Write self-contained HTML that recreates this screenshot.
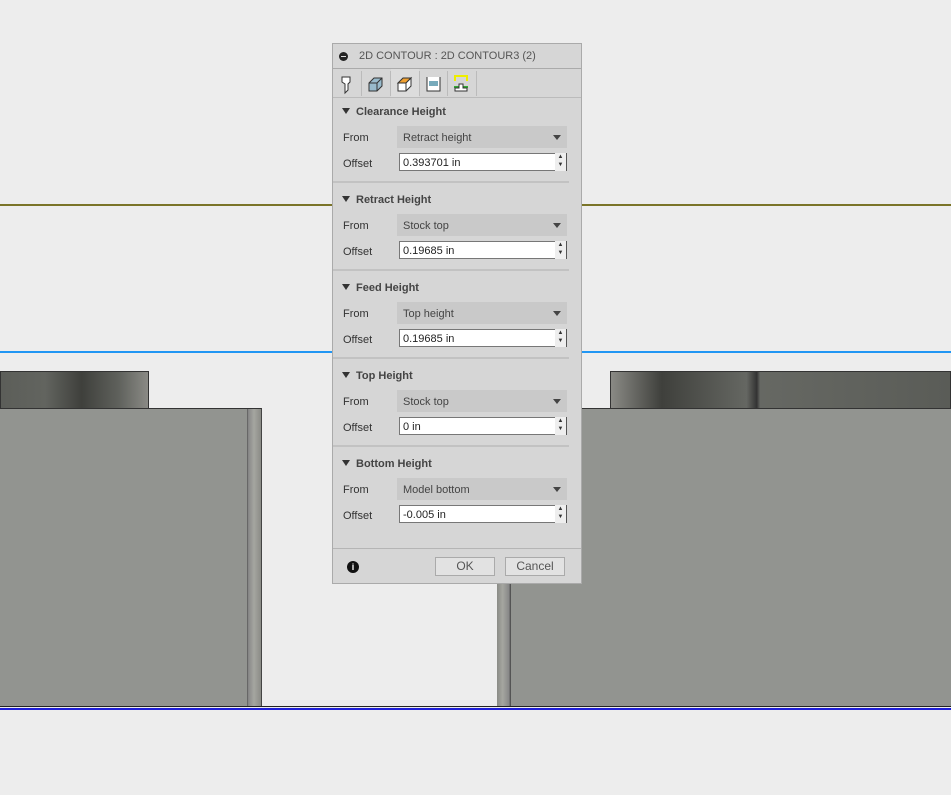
<!DOCTYPE html>
<html><head><style>
body{margin:0;width:951px;height:795px;background:#ededed;position:relative;overflow:hidden;font-family:"Liberation Sans",sans-serif;}
.a{position:absolute}
.dark{background:linear-gradient(90deg,#5c5e59 0%,#62645f 30%,#3f403c 55%,#5f615c 80%,#8a8a85 100%);border:1px solid #333;box-sizing:border-box}
.gray{background:#929490;}
.dlg{left:332px;top:43px;width:250px;height:541px;background:#d6d6d6;border:1px solid #aaa;box-sizing:border-box;font-size:11px;color:#333}
.sec{position:absolute;left:0;width:248px;height:88px}
.sec h{position:absolute;left:9px;top:8px;font-weight:bold;font-size:11px;color:#444}
.sec h b{display:inline-block;width:0;height:0;border-left:4px solid transparent;border-right:4px solid transparent;border-top:6px solid #333;margin-right:6px;vertical-align:1px}
.lbl{position:absolute;left:10px;font-size:11px;color:#333}
.dd{position:absolute;left:64px;top:28px;width:170px;height:22px;background:#c9c9c9}
.dd span{position:absolute;left:6px;top:6px;color:#444}
.dd i{position:absolute;right:6px;top:9px;border-left:4px solid transparent;border-right:4px solid transparent;border-top:5px solid #444}
.inp{position:absolute;left:66px;top:55px;width:156px;height:18px;background:#fff;border:1px solid #777;border-right:none;box-sizing:border-box;font-size:11px;padding:3px 3px 0;color:#222}
.sp{position:absolute;left:222px;top:55px;width:12px;height:18px;border-right:1px solid #555;box-sizing:border-box;font-size:6px;text-align:center;line-height:8px;background:#eee}
.hr{position:absolute;left:0;top:83px;width:236px;height:2px;background:#c2c2c2}
.btn{position:absolute;top:513px;height:19px;background:#e2e2e2;border:1px solid #aaa;box-sizing:border-box;text-align:center;font-size:12px;line-height:17px;color:#555}
</style></head><body>
<div class="a" style="left:0;top:204px;width:951px;height:2px;background:#7a7428"></div>
<div class="a" style="left:0;top:351px;width:951px;height:2px;background:#2196f3"></div>
<div class="a" style="left:0;top:706px;width:951px;height:1px;background:#222"></div>
<div class="a" style="left:0;top:708px;width:951px;height:2px;background:#1f1fd6"></div>
<div class="a dark" style="left:0;top:371px;width:149px;height:38px"></div>
<div class="a gray" style="left:0;top:408px;width:262px;height:298px;border-top:1px solid #333;border-right:1px solid #444;box-sizing:border-box"></div>
<div class="a" style="left:247px;top:409px;width:14px;height:297px;background:linear-gradient(90deg,#555 0,#888 10%,#a5a6a0 50%,#8a8b86 100%)"></div>
<div class="a dark" style="left:610px;top:371px;width:341px;height:38px;background:linear-gradient(90deg,#8a8a85 0,#3f403c 15%,#656762 40%,#333 43%,#666863 44%,#5a5c57 100%)"></div>
<div class="a gray" style="left:497px;top:408px;width:454px;height:298px;border-top:1px solid #333;box-sizing:border-box"></div>
<div class="a" style="left:497px;top:409px;width:14px;height:297px;background:linear-gradient(90deg,#8a8b86 0,#a5a6a0 40%,#888 85%,#444 100%)"></div>
<div class="a dlg">
<div class="a" style="left:0;top:0;width:248px;height:24px;border-bottom:1px solid #aaa;"><div class="a" style="left:6px;top:8px;width:9px;height:9px;border-radius:50%;background:#222"><div class="a" style="left:2px;top:4px;width:5px;height:1px;background:#ddd"></div></div><span class="a" style="left:26px;top:6px;color:#555;font-size:11px">2D CONTOUR : 2D CONTOUR3 (2)</span></div>
<div class="a" style="left:0;top:25px;width:248px;height:28px;border-bottom:1px solid #bbb">
<svg width="150" height="28" style="position:absolute;left:0;top:0">
<line x1="28.5" y1="2" x2="28.5" y2="27" stroke="#bbb"/><line x1="57.5" y1="2" x2="57.5" y2="27" stroke="#bbb"/><line x1="86.5" y1="2" x2="86.5" y2="27" stroke="#bbb"/><line x1="114.5" y1="2" x2="114.5" y2="27" stroke="#bbb"/><line x1="143.5" y1="2" x2="143.5" y2="27" stroke="#bbb"/>
<rect x="58" y="0" width="28" height="28" fill="#dcdcdc"/>
<path d="M9 8h8v5l-2 2v6l-3 3v-9l-3-2z" fill="#fff" stroke="#333"/>
<path d="M36 14l5-5h8v8l-5 5h-8z" fill="#9bc" stroke="#333"/><path d="M36 14h8v8M44 14l5-5" fill="none" stroke="#333"/>
<path d="M65 14l5-5h8l-5 5z" fill="#f0a030" stroke="#333"/><path d="M65 14h8v8h-8zM73 14l5-5v8l-5 5" fill="#fff" stroke="#333"/>
<path d="M94 8v14h13V8M96 13h9M96 16h9" fill="#fff" stroke="#333"/><rect x="96" y="12" width="9" height="5" fill="#7ab"/>
<path d="M122 12V7h12v5" fill="none" stroke="#ee0" stroke-width="2"/><path d="M121 18h14" stroke="#3a3" stroke-width="2"/><path d="M122 22v-3h4v-4h4v4h4v3z" fill="#fff" stroke="#333"/>
</svg></div>
<div class="sec" style="top:54px"><h><b></b>Clearance Height</h><div class="lbl" style="top:34px">From</div><div class="dd"><span>Retract height</span><i></i></div><div class="lbl" style="top:60px">Offset</div><div class="inp">0.393701 in</div><div class="sp">▲<br>▼</div><div class="hr"></div></div>
<div class="sec" style="top:142px"><h><b></b>Retract Height</h><div class="lbl" style="top:34px">From</div><div class="dd"><span>Stock top</span><i></i></div><div class="lbl" style="top:60px">Offset</div><div class="inp">0.19685 in</div><div class="sp">▲<br>▼</div><div class="hr"></div></div>
<div class="sec" style="top:230px"><h><b></b>Feed Height</h><div class="lbl" style="top:34px">From</div><div class="dd"><span>Top height</span><i></i></div><div class="lbl" style="top:60px">Offset</div><div class="inp">0.19685 in</div><div class="sp">▲<br>▼</div><div class="hr"></div></div>
<div class="sec" style="top:318px"><h><b></b>Top Height</h><div class="lbl" style="top:34px">From</div><div class="dd"><span>Stock top</span><i></i></div><div class="lbl" style="top:60px">Offset</div><div class="inp">0 in</div><div class="sp">▲<br>▼</div><div class="hr"></div></div>
<div class="sec" style="top:406px"><h><b></b>Bottom Height</h><div class="lbl" style="top:34px">From</div><div class="dd"><span>Model bottom</span><i></i></div><div class="lbl" style="top:60px">Offset</div><div class="inp">-0.005 in</div><div class="sp">▲<br>▼</div></div>
<div class="a" style="left:0;top:504px;width:248px;height:1px;background:#b5b5b5"></div>
<div class="a" style="left:14px;top:517px;width:12px;height:12px;border-radius:50%;background:#111;color:#fff;font-size:9px;font-weight:bold;text-align:center;line-height:12px">i</div>
<div class="btn" style="left:102px;width:60px">OK</div>
<div class="btn" style="left:172px;width:60px">Cancel</div>
</div>
</body></html>
